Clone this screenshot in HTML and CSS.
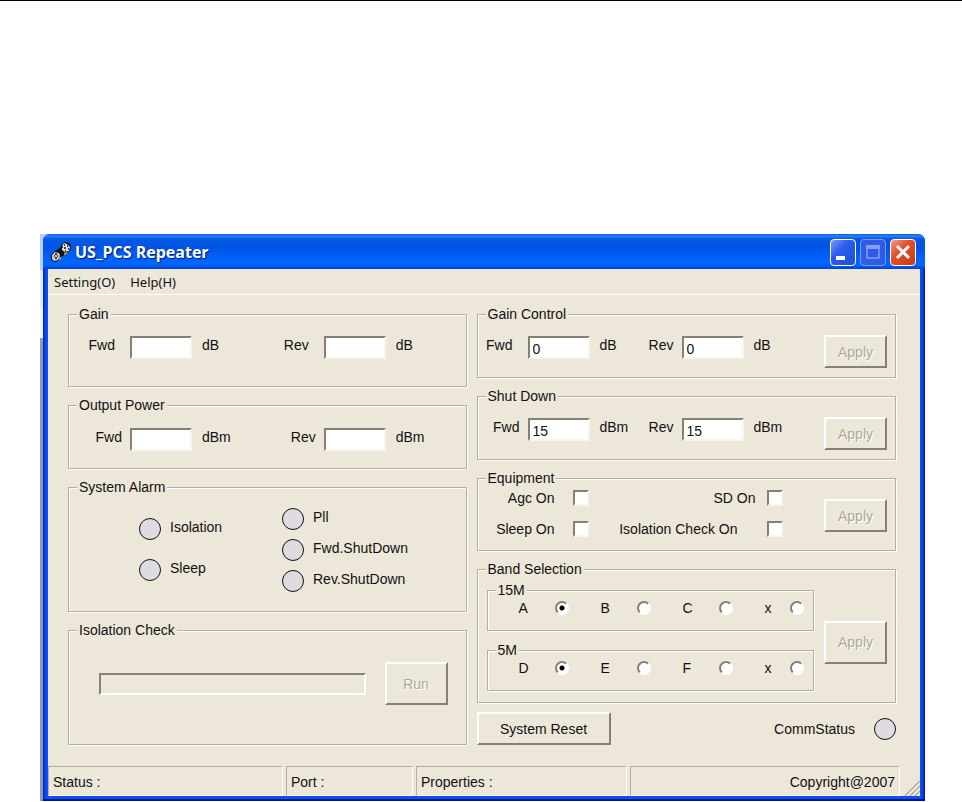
FILE: index.html
```html
<!DOCTYPE html>
<html lang="en">
<head>
    <meta charset="UTF-8">
    <meta name="viewport" content="width=device-width, initial-scale=1.0">
    <title>US_PCS Repeater</title>
    <link rel="stylesheet" href="styles.css">
</head>
<body>

<div class="backdrop">
<main class="window">
    <header class="titlebar">
        <svg class="app-icon" width="20" height="20" viewBox="0 0 20 20">
            <path d="M4 9l5-3 2-4 3-2 4 1 2 3-1 5-4 2-3 3-3 1-1 3-4 2-4-2V13z" fill="#111"/>
            <path d="M8 17l2-1M13 12l3-1" stroke="#b9a21c" stroke-width="2"/>
            <path d="M11 4l2-3 3 1 3 3-1 4-4 1-3-2z" fill="#ddd"/>
            <path d="M1 13l3-3 4 1 1 3-2 4-4 1-2-2z" fill="#ccc"/>
            <path d="M13 3h1M16 4h1M13 6h2M17 7h1M14 9h1M11 5h1M4 12h2M3 14h1M6 14h1M4 16h2" stroke="#111" stroke-width="1.5"/>
        </svg>
        <h1 class="title">US_PCS Repeater</h1>
        <div class="caption-buttons">
            <button type="button" class="caption" aria-label="Minimize">
                <svg width="24" height="24" viewBox="0 0 24 24"><path d="M5 16h9v4H5z" fill="#fff"/></svg>
            </button>
            <button type="button" class="caption caption-off" aria-label="Maximize" disabled>
                <svg width="24" height="24" viewBox="0 0 24 24"><path d="M6 6h12v12H6z" fill="none" stroke="#8a9cf0" stroke-width="1.5"/><path d="M5 5h14v4H5z" fill="#8a9cf0"/></svg>
            </button>
            <button type="button" class="caption caption-close" aria-label="Close">
                <svg width="24" height="24" viewBox="0 0 24 24"><path d="M6 6l12 12M18 6L6 18" stroke="#fff" stroke-width="3"/></svg>
            </button>
        </div>
    </header>

    <nav class="menu">
        <button type="button" class="menu-item">Setting(O)</button>
        <button type="button" class="menu-item">Help(H)</button>
    </nav>

    <form class="panels">
        <div class="column">
            <fieldset class="group gain">
                <legend>Gain</legend>
                <div class="pairs">
                    <div class="pair far"><label for="gainFwd">Fwd</label><input type="text" id="gainFwd"><span>dB</span></div>
                    <div class="pair far"><label for="gainRev">Rev</label><input type="text" id="gainRev"><span>dB</span></div>
                </div>
            </fieldset>

            <fieldset class="group output">
                <legend>Output Power</legend>
                <div class="pairs">
                    <div class="pair"><label for="outFwd">Fwd</label><input type="text" id="outFwd"><span>dBm</span></div>
                    <div class="pair"><label for="outRev">Rev</label><input type="text" id="outRev"><span>dBm</span></div>
                </div>
            </fieldset>

            <fieldset class="group">
                <legend>System Alarm</legend>
                <div class="alarms">
                    <ul class="leds leds-spread">
                        <li><i class="led"></i>Isolation</li>
                        <li><i class="led"></i>Sleep</li>
                    </ul>
                    <ul class="leds">
                        <li><i class="led"></i>Pll</li>
                        <li><i class="led"></i>Fwd.ShutDown</li>
                        <li><i class="led"></i>Rev.ShutDown</li>
                    </ul>
                </div>
            </fieldset>

            <fieldset class="group">
                <legend>Isolation Check</legend>
                <div class="check-run">
                    <progress class="progress" value="0" max="100" aria-label="Isolation Check"></progress>
                    <button type="button" class="btn btn-tall" disabled>Run</button>
                </div>
            </fieldset>
        </div>

        <div class="column">
            <fieldset class="group control">
                <legend>Gain Control</legend>
                <div class="settings">
                    <div class="pair far"><label for="ctlFwd">Fwd</label><input type="text" id="ctlFwd" value="0"><span>dB</span></div>
                    <div class="pair"><label for="ctlRev">Rev</label><input type="text" id="ctlRev" value="0"><span>dB</span></div>
                    <button type="button" class="btn" disabled>Apply</button>
                </div>
            </fieldset>

            <fieldset class="group control">
                <legend>Shut Down</legend>
                <div class="settings">
                    <div class="pair"><label for="sdFwd">Fwd</label><input type="text" id="sdFwd" value="15"><span>dBm</span></div>
                    <div class="pair"><label for="sdRev">Rev</label><input type="text" id="sdRev" value="15"><span>dBm</span></div>
                    <button type="button" class="btn" disabled>Apply</button>
                </div>
            </fieldset>

            <fieldset class="group equipment">
                <legend>Equipment</legend>
                <div class="settings">
                    <div class="checks">
                        <label class="check check-far">Agc On<input type="checkbox"></label>
                        <label class="check">SD On<input type="checkbox"></label>
                        <label class="check check-far">Sleep On<input type="checkbox"></label>
                        <label class="check check-farther">Isolation Check On<input type="checkbox"></label>
                    </div>
                    <button type="button" class="btn" disabled>Apply</button>
                </div>
            </fieldset>

            <fieldset class="group">
                <legend>Band Selection</legend>
                <div class="band-body">
                    <div class="band-list">
                        <fieldset class="group">
                            <legend>15M</legend>
                            <div class="radios">
                                <label><span>A</span><input type="radio" name="band15" checked></label>
                                <label><span>B</span><input type="radio" name="band15"></label>
                                <label><span>C</span><input type="radio" name="band15"></label>
                                <label class="none"><span>x</span><input type="radio" name="band15"></label>
                            </div>
                        </fieldset>
                        <fieldset class="group">
                            <legend>5M</legend>
                            <div class="radios">
                                <label><span>D</span><input type="radio" name="band5" checked></label>
                                <label><span>E</span><input type="radio" name="band5"></label>
                                <label><span>F</span><input type="radio" name="band5"></label>
                                <label class="none"><span>x</span><input type="radio" name="band5"></label>
                            </div>
                        </fieldset>
                    </div>
                    <button type="button" class="btn btn-tall" disabled>Apply</button>
                </div>
            </fieldset>

            <div class="bottom-row">
                <button type="button" class="btn btn-reset">System Reset</button>
                <div class="comm">CommStatus<i class="led"></i></div>
            </div>
        </div>
    </form>

    <footer class="statusbar">
        <div class="cell">Status :</div>
        <div class="cell">Port :</div>
        <div class="cell">Properties :</div>
        <div class="cell cell-right">Copyright@2007</div>
        <svg class="grip" width="16" height="16" viewBox="0 0 16 16">
            <path d="M2 16L16 2M7 16l9-9M12 16l4-4" stroke="#fff" stroke-width="1.5"/>
            <path d="M1 16L16 1M6 16L16 6M11 16l5-5" stroke="#aca899" stroke-width="1.5"/>
        </svg>
    </footer>
</main>
</div>

</body>
</html>
```
FILE: styles.css
```css
* {
    box-sizing: border-box;
}

body {
    margin: 0;
    border-top: 1px solid #000;
    background: #fff;
    color: #111;
    font: 14px/18px "Liberation Sans", Arial, sans-serif;
}

button,
input {
    font: inherit;
    color: inherit;
}

/* sliver of another window showing at the left edge */
.backdrop {
    margin: 233px 37px 0 40px;
    padding-left: 3px;
    background: linear-gradient(90deg, transparent 50%, #fff 50%), linear-gradient(#b9cdf2 0 36px, #e4ecfb 36px 72px, #f2f4fb 72px 104px, #8f99b8 104px);
}

.window {
    padding: 0 5px 3px;
    background: linear-gradient(90deg, #0020c8 0, #0a50f0 3px, #0a50f0 calc(100% - 3px), #00109a 100%);
    border-bottom: 2px solid #00109a;
    border-radius: 7px 7px 0 0;
    overflow: hidden;
}

.titlebar {
    display: flex;
    align-items: center;
    height: 35px;
    margin: 0 -5px;
    padding: 1px 9px 0 8px;
    background: linear-gradient(#0a5be8 0, #2f7df8 2px, #0458e4 5px, #0054e3 14px, #0064fc 26px, #0066ff 31px, #003fd0 35px);
}

.title {
    flex: 1;
    margin: 0 0 0 4px;
    color: #fff;
    font: bold 16px/20px "Open Sans", "Trebuchet MS", sans-serif;
    text-shadow: 1px 1px 1px #00187a;
}

.caption-buttons {
    display: flex;
    gap: 4px;
}

.caption {
    width: 26px;
    height: 27px;
    padding: 0;
    border: 1px solid #fff;
    border-radius: 4px;
    background: linear-gradient(135deg, #7b9df8, #2b5bea 40%, #1d4fe0);
}

.caption svg {
    display: block;
}

.caption-off {
    border-color: #7a9cf5;
    background: #2d5ce6;
}

.caption-close {
    background: linear-gradient(135deg, #f0a088, #e1502c 40%, #c83a10);
}

.menu {
    display: flex;
    gap: 15px;
    height: 26px;
    padding: 3px 6px;
    background: #ede7da;
    border-bottom: 1px solid #fff;
}

.menu-item {
    padding: 0;
    border: 0;
    background: none;
    font: 13px/18px "Noto Sans", Tahoma, sans-serif;
}

.panels {
    display: grid;
    grid-template-columns: 399fr 420fr;
    gap: 10px;
    padding: 10px 24px 21px 20px;
    background: #ede7da;
}

.column {
    display: flex;
    flex-direction: column;
    gap: 9px;
}

/* etched group box */
.group {
    min-width: 0;
    margin: 0;
    padding: 0;
    border: 1px solid #b3aea1;
    box-shadow: 1px 1px 0 #fff, inset 1px 1px 0 #fff;
}

.group > legend {
    margin-left: 8px;
    padding: 0 2px;
    background: #ede7da;
}

.gain {
    padding: 13px 9px 27px 0;
}

.output {
    padding: 14px 9px 17px 0;
}

.pairs {
    display: grid;
    grid-template-columns: 1fr 1fr;
}

.pair {
    display: grid;
    grid-template-columns: 61px 62px 1fr;
}

.pair label {
    padding-right: 8px;
    text-align: right;
}

.pair.far label {
    padding-right: 15px;
}

.pair span {
    padding-left: 10px;
}

.pair input {
    width: 62px;
    height: 23px;
    padding: 3px 3px 0;
    border: 2px solid;
    border-color: #848073 #f7f5ee #f7f5ee #848073;
    border-radius: 0;
    background: #fff;
    outline: 0;
}

.alarms {
    display: grid;
    grid-template-columns: 143px 1fr;
    padding: 12px 0 19px 70px;
}

.leds {
    display: flex;
    flex-direction: column;
    gap: 9px;
    margin: 0;
    padding: 0;
    list-style: none;
}

.leds-spread {
    gap: 19px;
    padding-top: 10px;
}

.leds li {
    display: flex;
    gap: 9px;
}

.led {
    width: 22px;
    height: 22px;
    border: 1px solid #111;
    border-radius: 50%;
    background: #dedce0;
}

.check-run {
    display: flex;
    align-items: center;
    gap: 19px;
    padding: 23px 18px 39px 30px;
}

.progress {
    flex: 1;
    min-width: 0;
    height: 22px;
    appearance: none;
    border: 2px solid;
    border-color: #848073 #fff #fff #848073;
    background: none;
}

.progress::-webkit-progress-bar {
    background: transparent;
}

.btn {
    width: 63px;
    height: 33px;
    padding: 0;
    border: 2px solid;
    border-color: #fff #848073 #848073 #fff;
    border-radius: 0;
    background: #ede7da;
}

.btn:disabled {
    color: #aca899;
    text-shadow: 1px 1px 0 #fff;
}

.btn-tall {
    height: 43px;
}

.control {
    padding: 12px 8px 9px 0;
}

.settings {
    display: flex;
}

.settings .pair {
    grid-template-columns: 50px 62px 42px;
    padding-top: 1px;
}

.settings .btn,
.band-body .btn {
    margin-left: auto;
}

.equipment {
    padding: 2px 8px 12px 0;
}

.equipment .btn {
    align-self: center;
    margin-top: 4px;
}

.checks {
    display: grid;
    grid-template-columns: 111px 194px;
    row-gap: 13px;
}

.check {
    display: flex;
    justify-content: flex-end;
    gap: 11px;
}

.check-far {
    gap: 18px;
}

.check-farther {
    gap: 29px;
}

.check input {
    appearance: none;
    width: 16px;
    height: 16px;
    margin: 1px 0;
    border: 2px solid;
    border-color: #848073 #f7f5ee #f7f5ee #848073;
    background: #fff;
}

.check input:checked {
    background: #333;
}

.band-body {
    display: flex;
    align-items: center;
    padding: 3px 8px 11px 9px;
}

.band-body .btn {
    margin-top: 12px;
}

.band-list {
    display: flex;
    flex-direction: column;
    gap: 10px;
    width: 327px;
}

.radios {
    display: grid;
    grid-template-columns: 82px 82px 82px 1fr;
    padding: 0 0 13px 31px;
}

.radios label {
    display: flex;
    align-items: center;
}

.radios span {
    width: 36px;
}

.radios .none span {
    width: 25px;
}

.radios input {
    appearance: none;
    width: 14px;
    height: 14px;
    margin: 0;
    border: 2px solid;
    border-color: #848073 #fff #fff #848073;
    border-radius: 50%;
    background: #fff;
}

.radios input:checked {
    background: radial-gradient(circle, #000 0 2px, #fff 3px);
}

.bottom-row {
    display: flex;
    justify-content: space-between;
}

.btn-reset {
    width: 134px;
}

.comm {
    display: flex;
    align-items: center;
    gap: 19px;
}

.statusbar {
    display: grid;
    grid-template-columns: 235fr 127fr 211fr 270fr 17px;
    gap: 3px;
    background: #ede7da;
}

.cell {
    padding: 6px 4px 4px;
    border: 1px solid;
    border-color: #b3aea1 #fff #fff #b3aea1;
}

.cell-right {
    text-align: right;
}

.grip {
    align-self: end;
    justify-self: end;
}
```
